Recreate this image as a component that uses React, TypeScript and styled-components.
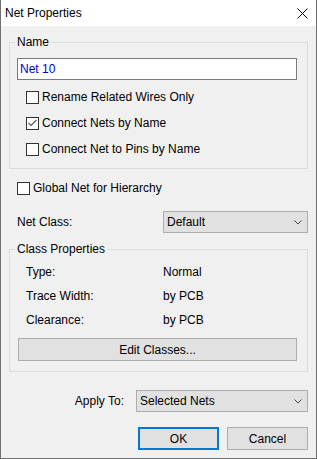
import React from "react";
import styled, { createGlobalStyle } from "styled-components";

const Global = createGlobalStyle`
  html, body { margin: 0; padding: 0; background: #ffffff; }
  body {
    font-family: "Liberation Sans", Arial, sans-serif;
    font-size: 12px;
    color: #000000;
  }
  * { box-sizing: border-box; }
`;

const Window = styled.div`
  width: 317px;
  height: 459px;
  display: flex;
  flex-direction: column;
  border: 1px solid #707070;
  border-top: none;
  background: #f0f0f0;
`;

const TitleBar = styled.div`
  flex: none;
  height: 26px;
  background: #ffffff;
  display: flex;
  align-items: center;
  justify-content: space-between;
  padding-left: 4px;
`;

const Title = styled.span`
  font-size: 12px;
  line-height: 14px;
`;

const CloseButton = styled.div`
  width: 28px;
  height: 26px;
  display: flex;
  align-items: center;
  justify-content: center;
`;

const Body = styled.div`
  flex: 1;
  display: flex;
  flex-direction: column;
  padding: 16px 8px 0 8px;
`;

const GroupBox = styled.div<{ $pad: string; $mt?: number }>`
  position: relative;
  border: 1px solid #dcdcdc;
  padding: ${(p) => p.$pad};
  margin-top: ${(p) => p.$mt ?? 0}px;
  display: flex;
  flex-direction: column;
`;

const Caption = styled.span`
  position: absolute;
  top: -8px;
  left: 5px;
  padding: 0 2px;
  line-height: 14px;
  background: #f0f0f0;
`;

const TextInput = styled.input`
  height: 22px;
  border: 1px solid #7a7a7a;
  background: #ffffff;
  padding: 0 2px;
  font: inherit;
  color: #0000cd;
  outline: none;
`;

const CheckList = styled.div<{ $mt: number; $indent: number }>`
  display: flex;
  flex-direction: column;
  gap: 13px;
  margin-top: ${(p) => p.$mt}px;
  padding-left: ${(p) => p.$indent}px;
`;

const CheckRow = styled.div`
  display: flex;
  align-items: center;
  gap: 3px;
  height: 13px;
  line-height: 13px;
  white-space: nowrap;
`;

const Box = styled.span`
  flex: none;
  width: 13px;
  height: 13px;
  border: 1px solid #333333;
  background: #ffffff;
  display: flex;
  align-items: center;
  justify-content: center;
`;

const FieldRow = styled.div<{ $mt: number }>`
  display: flex;
  align-items: center;
  margin-top: ${(p) => p.$mt}px;
`;

const FieldLabel = styled.span<{ $width?: number }>`
  flex: none;
  width: ${(p) => (p.$width ? `${p.$width}px` : "auto")};
  margin-left: 8px;
`;

const Select = styled.div<{ $width?: number }>`
  flex: ${(p) => (p.$width ? "none" : "1")};
  width: ${(p) => (p.$width ? `${p.$width}px` : "auto")};
  height: 22px;
  border: 1px solid #adadad;
  background: #e1e1e1;
  display: flex;
  align-items: center;
  justify-content: space-between;
  padding: 0 5px 0 3px;
`;

const PropGrid = styled.div`
  display: grid;
  grid-template-columns: 137px 1fr;
  grid-auto-rows: 24px;
  align-items: center;
  padding-left: 8px;
`;

const WideButton = styled.div`
  margin-top: 6px;
  height: 23px;
  border: 1px solid #adadad;
  background: #e1e1e1;
  display: flex;
  align-items: center;
  justify-content: center;
`;

const ApplyRow = styled.div`
  display: flex;
  justify-content: flex-end;
  align-items: center;
  gap: 12px;
  margin-top: 18px;
`;

const ButtonRow = styled.div`
  display: flex;
  justify-content: flex-end;
  gap: 8px;
  margin-top: 15px;
`;

const DialogButton = styled.div<{ $default?: boolean }>`
  width: 81px;
  height: 23px;
  background: #e1e1e1;
  border: ${(p) => (p.$default ? "2px solid #0078d7" : "1px solid #adadad")};
  display: flex;
  align-items: center;
  justify-content: center;
`;

const Chevron = () => (
  <svg width="8" height="5" viewBox="0 0 8 5">
    <polyline points="0.5,0.5 4,4 7.5,0.5" fill="none" stroke="#444" strokeWidth="1" />
  </svg>
);

const CheckBox = ({ checked, label }: { checked?: boolean; label: string }) => (
  <CheckRow>
    <Box>
      {checked && (
        <svg width="11" height="11" viewBox="0 0 11 11">
          <polyline points="1.5,5 4,7.5 9.5,2" fill="none" stroke="#555" strokeWidth="1.1" />
        </svg>
      )}
    </Box>
    <span>{label}</span>
  </CheckRow>
);

export default function App() {
  return (
    <>
      <Global />
      <Window>
        <TitleBar>
          <Title>Net Properties</Title>
          <CloseButton>
            <svg width="11" height="11" viewBox="0 0 11 11">
              <line x1="0.5" y1="0.5" x2="10.5" y2="10.5" stroke="#000" strokeWidth="1" />
              <line x1="10.5" y1="0.5" x2="0.5" y2="10.5" stroke="#000" strokeWidth="1" />
            </svg>
          </CloseButton>
        </TitleBar>
        <Body>
          <GroupBox $pad="15px 10px 12px 7px">
            <Caption>Name</Caption>
            <TextInput readOnly value="Net 10" />
            <CheckList $mt={11} $indent={9}>
              <CheckBox label="Rename Related Wires Only" />
              <CheckBox checked label="Connect Nets by Name" />
              <CheckBox label="Connect Net to Pins by Name" />
            </CheckList>
          </GroupBox>

          <CheckList $mt={13} $indent={8}>
            <CheckBox label="Global Net for Hierarchy" />
          </CheckList>

          <FieldRow $mt={16}>
            <FieldLabel $width={146}>Net Class:</FieldLabel>
            <Select>
              <span>Default</span>
              <Chevron />
            </Select>
          </FieldRow>

          <GroupBox $pad="10px 10px 10px 8px" $mt={16}>
            <Caption>Class Properties</Caption>
            <PropGrid>
              <span>Type:</span>
              <span>Normal</span>
              <span>Trace Width:</span>
              <span>by PCB</span>
              <span>Clearance:</span>
              <span>by PCB</span>
            </PropGrid>
            <WideButton>Edit Classes...</WideButton>
          </GroupBox>

          <ApplyRow>
            <span>Apply To:</span>
            <Select $width={172}>
              <span>Selected Nets</span>
              <Chevron />
            </Select>
          </ApplyRow>

          <ButtonRow>
            <DialogButton $default>OK</DialogButton>
            <DialogButton>Cancel</DialogButton>
          </ButtonRow>
        </Body>
      </Window>
    </>
  );
}
